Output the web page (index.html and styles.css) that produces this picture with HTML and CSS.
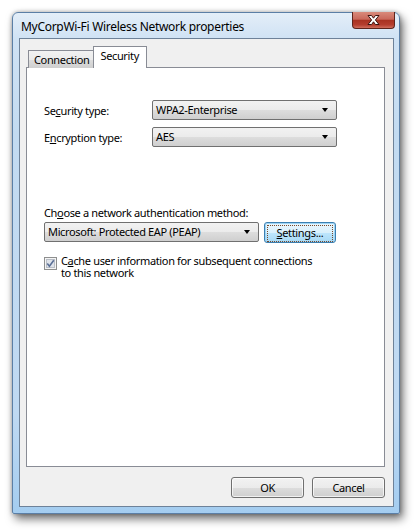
FILE: index.html
```html
<!DOCTYPE html>
<html>
<head>
<meta charset="utf-8">
<link rel="stylesheet" href="styles.css">
</head>
<body>
<div class="window">
  <div class="titlebar">
    <span class="title">MyCorpWi-Fi Wireless Network properties</span>
    <div class="close">
      <svg width="41" height="16" viewBox="0 0 41 16">
        <path d="M15 3.5 L18.6 3.5 L20.5 6.2 L22.4 3.5 L26 3.5 L22.4 8 L26 12.5 L22.4 12.5 L20.5 9.8 L18.6 12.5 L15 12.5 L18.6 8 Z" fill="#ffffff" stroke="#3d1410" stroke-width="1" stroke-linejoin="round"/>
      </svg>
    </div>
  </div>
  <div class="client">
    <div class="tabs">
      <div class="tab">Connection</div>
      <div class="tab active">Security</div>
    </div>
    <div class="panel">
      <div class="field">
        <span class="label">Se<u>c</u>urity type:</span>
        <div class="select wide">WPA2-Enterprise<span class="arrow"></span></div>
      </div>
      <div class="field">
        <span class="label">E<u>n</u>cryption type:</span>
        <div class="select wide">AES<span class="arrow"></span></div>
      </div>
      <div class="choose">Ch<u>o</u>ose a network authentication method:</div>
      <div class="authrow">
        <div class="select auth">Microsoft: Protected EAP (PEAP)<span class="arrow"></span></div>
        <div class="btn settings"><span class="focus"><u>S</u>ettings...</span></div>
      </div>
      <div class="check">
        <svg class="box" width="13" height="13" viewBox="0 0 13 13">
          <rect x="0.5" y="0.5" width="12" height="12" fill="#f4f4f4" stroke="#8e8f8f"/>
          <rect x="2.5" y="2.5" width="8" height="8" fill="#dfe3ea" stroke="#b9bec6"/>
          <path d="M3.3 6.6 L5.4 9.2 L9.8 3.2" fill="none" stroke="#5a6f96" stroke-width="1.6"/>
        </svg>
        <span class="checktext">C<u>a</u>che user information for subsequent connections<br>to this network</span>
      </div>
    </div>
    <div class="buttons">
      <div class="btn">OK</div>
      <div class="btn">Cancel</div>
    </div>
  </div>
</div>
</body>
</html>
```

FILE: styles.css
```css
html, body {
  margin: 0;
  padding: 0;
  background: #ffffff;
}
body {
  width: 417px;
  height: 531px;
  overflow: hidden;
  font-family: "Noto Sans", "Open Sans", sans-serif;
  font-size: 11px;
  letter-spacing: -0.35px;
  color: #000;
}
u { text-decoration: underline; text-underline-offset: 1px; }

.window {
  margin: 12px 0 0 12px;
  width: 388px;
  height: 502px;
  box-sizing: border-box;
  border: 1px solid #5b7fa6;
  border-radius: 6px 6px 2px 2px;
  background: linear-gradient(180deg, #e4eef8 0px, #cfe2f4 26px, #c3dbf1 120px, #bfd9f2 400px, #a4cdf0 100%);
  box-shadow: 3px 5px 10px rgba(0,0,0,0.55), 0 0 4px rgba(0,0,0,0.3);
  display: flex;
  flex-direction: column;
  padding: 0 5px 6px 6px;
}

.titlebar {
  height: 25px;
  display: flex;
  align-items: flex-start;
  justify-content: space-between;
}
.title {
  font-size: 12px;
  padding: 6px 0 0 2px;
  line-height: 15px;
  letter-spacing: -0.3px;
}
.close {
  width: 43px;
  height: 17px;
  border: 1px solid #5e241c;
  border-top: none;
  border-radius: 0 0 4px 4px;
  box-sizing: border-box;
  background: linear-gradient(180deg, #d98a7b 0%, #c9685a 45%, #a93222 52%, #b43d2e 80%, #cf6d5c 100%);
  margin-top: -1px;
  margin-right: -1px;
}
.close svg { display: block; }

.client {
  flex: 1;
  border: 1px solid #6e8299;
  background: #f0f0f0;
  padding: 8px 8px 8px 6px;
  display: flex;
  flex-direction: column;
}

.tabs {
  display: flex;
  padding-left: 2px;
  height: 21px;
  align-items: flex-end;
  position: relative;
  z-index: 1;
  margin-bottom: -1px;
}
.tab {
  height: 18px;
  box-sizing: border-box;
  border: 1px solid #898c95;
  border-bottom: none;
  background: linear-gradient(180deg, #f2f2f2 0%, #ebebeb 50%, #dddddd 51%, #cfcfcf 100%);
  padding: 0 4px 0 5px;
  line-height: 17px;
}
.tab.active {
  height: 22px;
  background: #fff;
  padding: 0 7px 0 6px;
  line-height: 18px;
  margin-left: -1px;
}

.panel {
  height: 400px;
  box-sizing: border-box;
  border: 1px solid #898c95;
  background: #fff;
  padding: 32px 0 0 17px;
}

.field {
  display: flex;
  align-items: center;
  height: 20px;
  margin-bottom: 7px;
}
.label {
  width: 108px;
}
.select {
  position: relative;
  height: 20px;
  box-sizing: border-box;
  border: 1px solid #707070;
  border-radius: 2px;
  background: linear-gradient(180deg, #f2f2f2 0%, #ebebeb 50%, #dddddd 51%, #cfcfcf 100%);
  padding: 0 0 0 3px;
  line-height: 18px;
}
.select.wide { width: 185px; }
.arrow {
  position: absolute;
  right: 8px;
  top: 7px;
  width: 0;
  height: 0;
  border-left: 3.5px solid transparent;
  border-right: 3.5px solid transparent;
  border-top: 4px solid #000;
}

.choose {
  margin-top: 59px;
  line-height: 14px;
}
.authrow {
  display: flex;
  margin-top: 2px;
  gap: 5px;
}
.select.auth { width: 215px; height: 20px; }

.btn {
  height: 21px;
  box-sizing: border-box;
  border: 1px solid #707070;
  border-radius: 3px;
  background: linear-gradient(180deg, #f2f2f2 0%, #ebebeb 50%, #dddddd 51%, #cfcfcf 100%);
  box-shadow: inset 0 0 0 1px rgba(255,255,255,0.7);
  text-align: center;
  line-height: 19px;
  width: 73px;
}
.btn.settings {
  width: 72px;
  border-color: #3c7fb1;
  background: linear-gradient(180deg, #eaf6fd 0%, #d9f0fc 50%, #bee6fd 51%, #a7d9f5 100%);
  box-shadow: inset 0 0 0 1px #9fd5f5;
  padding: 2px;
}
.focus {
  display: block;
  height: 15px;
  border: 1px dotted #7a4a2a;
  line-height: 14px;
}

.check {
  display: flex;
  margin-top: 13px;
  align-items: flex-start;
}
.box { flex: none; margin-top: 1px; margin-right: 4px; }
.checktext { line-height: 12px; margin-top: -1px; }

.buttons {
  display: flex;
  justify-content: flex-end;
  gap: 8px;
  margin-top: 10px;
}
```
